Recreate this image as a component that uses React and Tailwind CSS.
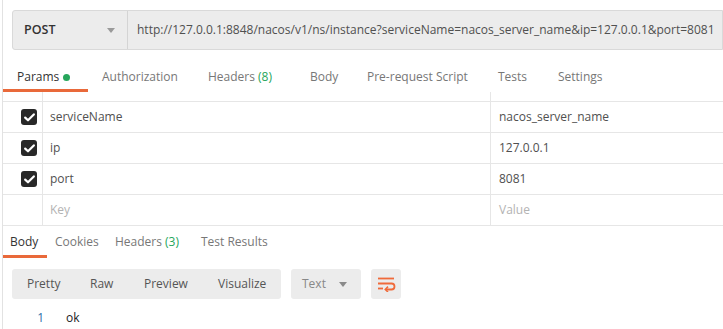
import React from "react";

const font = { fontFamily: "'Open Sans', 'Noto Sans', sans-serif" };

const params = [
  { key: "serviceName", value: "nacos_server_name" },
  { key: "ip", value: "127.0.0.1" },
  { key: "port", value: "8081" },
];

const Caret = ({ color = "#8a8a8a" }) => (
  <svg width="8" height="5" viewBox="0 0 8 5">
    <path d="M0 0 L8 0 L4 5 Z" fill={color} />
  </svg>
);

const Check = () => (
  <div className="w-[16px] h-[16px] rounded-[3px] bg-[#282828] flex items-center justify-center">
    <svg width="11" height="9" viewBox="0 0 11 9">
      <path d="M1.2 4.6 L4 7.3 L9.8 1.4" stroke="white" strokeWidth="2.2" fill="none" strokeLinecap="round" strokeLinejoin="round" />
    </svg>
  </div>
);

const WrapIcon = () => (
  <svg width="20" height="16" viewBox="0 0 20 16">
    <path d="M2 2.5 H18" stroke="#f06a3a" strokeWidth="1.8" />
    <path d="M2 7.5 H15.5 a3 3 0 0 1 0 6 H10" stroke="#f06a3a" strokeWidth="1.8" fill="none" />
    <path d="M2 12.5 H7" stroke="#f06a3a" strokeWidth="1.8" />
    <path d="M12 10.6 L9.3 13.5 L12 16" stroke="#f06a3a" strokeWidth="1.6" fill="none" />
  </svg>
);

export default function App() {
  return (
    <div className="w-[723px] h-[329px] overflow-hidden bg-white" style={font}>
      <div className="ml-[2px] h-full border-l border-[#e2e2e2] text-[12px] text-[#505050]">
        {/* request bar */}
        <div className="pt-[10px] pl-[9px]">
          <div className="flex h-[40px] bg-[#ececec] border border-[#d9d9d9] rounded-l-[3px]">
            <div className="w-[115px] shrink-0 flex items-center justify-between pl-[11px] pr-[12px] border-r border-[#d4d4d4]">
              <span className="font-semibold text-[#333] text-[12.5px]">POST</span>
              <Caret color="#9a9a9a" />
            </div>
            <div className="flex items-center pl-[9px] whitespace-nowrap text-[12px] text-[#505050]">
              http://127.0.0.1:8848/nacos/v1/ns/instance?serviceName=nacos_server_name&amp;ip=127.0.0.1&amp;port=8081
            </div>
          </div>
        </div>

        {/* request tabs */}
        <div className="flex h-[42px] items-end">
          <div className="w-[85px] h-full flex flex-col justify-end">
            <div className="flex items-center pl-[14px] pb-[3px] text-[#333]">
              Params
              <span className="ml-[4px] w-[7px] h-[7px] rounded-full bg-[#26a65b]" />
            </div>
            <div className="h-[3px] bg-[#e9693a]" />
          </div>
          <div className="flex pb-[6px] pl-[14px] text-[#777] whitespace-nowrap">
            <span className="w-[106px]">Authorization</span>
            <span className="w-[102px]">Headers <span className="text-[#26a65b]">(8)</span></span>
            <span className="w-[57px]">Body</span>
            <span className="w-[131px]">Pre-request Script</span>
            <span className="w-[60px]">Tests</span>
            <span>Settings</span>
          </div>
        </div>

        {/* params table */}
        <div className="flex h-[9px]">
          <div className="w-[40px] border-r border-[#e6e6e6]" />
          <div className="w-[448px] border-r border-[#e6e6e6]" />
        </div>
        <div className="border-t border-[#e6e6e6]">
          {params.map((p) => (
            <div key={p.key} className="flex h-[31px] border-b border-[#e6e6e6]">
              <div className="w-[40px] flex items-center justify-end pr-[5px] border-r border-[#e6e6e6]">
                <Check />
              </div>
              <div className="w-[448px] flex items-center pl-[7px] border-r border-[#e6e6e6] text-[#505050]">{p.key}</div>
              <div className="flex items-center pl-[8px] text-[#505050]">{p.value}</div>
            </div>
          ))}
          <div className="flex h-[31px] border-b border-[#e6e6e6]">
            <div className="w-[40px] border-r border-[#e6e6e6]" />
            <div className="w-[448px] flex items-center pl-[7px] border-r border-[#e6e6e6] text-[#b3b3b3]">Key</div>
            <div className="flex items-center pl-[8px] text-[#b3b3b3]">Value</div>
          </div>
        </div>

        {/* response tabs */}
        <div className="flex h-[32px] items-end">
          <div className="w-[44px] flex flex-col">
            <div className="pl-[7px] pb-[4px] text-[#333]">Body</div>
            <div className="h-[3px] bg-[#e9693a]" />
          </div>
          <div className="flex pb-[7px] pl-[8px] text-[#777] whitespace-nowrap">
            <span className="w-[60px]">Cookies</span>
            <span className="w-[86px]">Headers <span className="text-[#26a65b]">(3)</span></span>
            <span>Test Results</span>
          </div>
        </div>

        {/* response toolbar */}
        <div className="flex items-center pl-[9px] pt-[11px] gap-[10px]">
          <div className="w-[269px] h-[30px] flex items-center pl-[15px] bg-[#ececec] rounded-[3px] text-[#555]">
            <span className="w-[63px]">Pretty</span>
            <span className="w-[54px]">Raw</span>
            <span className="w-[74px]">Preview</span>
            <span>Visualize</span>
          </div>
          <div className="w-[70px] h-[30px] flex items-center justify-between pl-[11px] pr-[14px] bg-[#ececec] rounded-[3px] text-[#888]">
            <span>Text</span>
            <Caret />
          </div>
          <div className="w-[30px] h-[30px] flex items-center justify-center bg-[#ececec] rounded-[3px]">
            <WrapIcon />
          </div>
        </div>

        {/* response body */}
        <div className="flex items-center pt-[10px] text-[12px]">
          <span className="w-[41px] text-right text-[#2f6fa8]">1</span>
          <span className="ml-[22px] text-[#222]">ok</span>
        </div>
      </div>
    </div>
  );
}
